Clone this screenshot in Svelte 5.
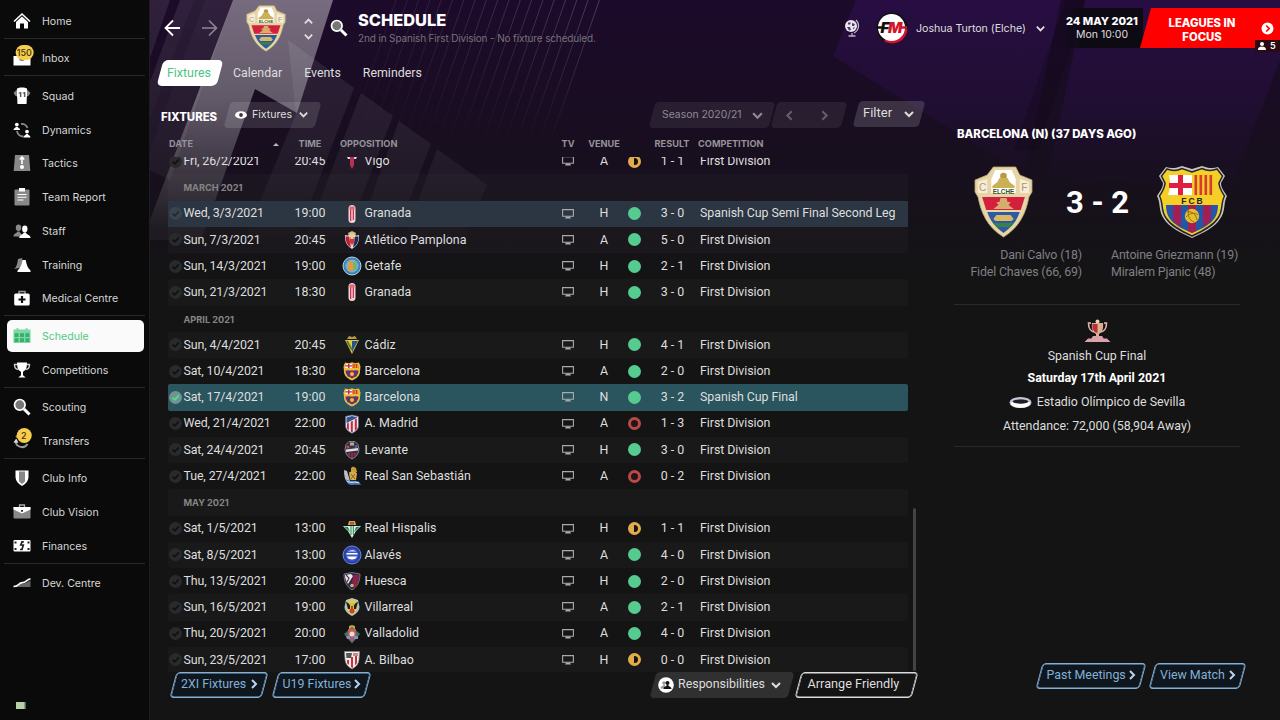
<script>
	const nav = [
		[{ label: 'Home', icon: 'home' }],
		[{ label: 'Inbox', icon: 'inbox', count: 150 }],
		[
			{ label: 'Squad', icon: 'squad' },
			{ label: 'Dynamics', icon: 'dynamics' },
			{ label: 'Tactics', icon: 'tactics' },
			{ label: 'Team Report', icon: 'report' },
			{ label: 'Staff', icon: 'staff' },
			{ label: 'Training', icon: 'training' },
			{ label: 'Medical Centre', icon: 'medical' }
		],
		[
			{ label: 'Schedule', icon: 'schedule' },
			{ label: 'Competitions', icon: 'cup' }
		],
		[
			{ label: 'Scouting', icon: 'search' },
			{ label: 'Transfers', icon: 'transfers', count: 2 }
		],
		[
			{ label: 'Club Info', icon: 'shield' },
			{ label: 'Club Vision', icon: 'briefcase' },
			{ label: 'Finances', icon: 'money' }
		],
		[{ label: 'Dev. Centre', icon: 'dev' }]
	];

	// 18x18 glyphs
	const icons = {
		home: '<path d="M1 9.5 9 2l8 7.5" fill="none" stroke="#fff" stroke-width="1.6"/><path d="M3 10 9 4.6 15 10v6.5h-4V11.5H7v5H3z" fill="#fff"/>',
		inbox: '<path d="M.5 7h17v9.500H.5z" fill="#fff"/><path d="M6 9a3 3 0 0 0 6 0V7H6z" fill="#777"/>',
		squad: '<path d="M.5 6 5 1.500 6 8l-3 1.500z" fill="#888"/><path d="M17.500 6 13 1.500 12 8l3 1.500z" fill="#888"/><path d="M4 1.500 7 .5h4l3 1v6l-.5 9.500h-9L4 7.500z" fill="#fff"/><text x="9" y="10" font-size="8" font-weight="700" font-family="Roboto" letter-spacing="-.5" text-anchor="middle" fill="#333">11</text>',
		dynamics: '<path d="M8 3a6.500 6.500 0 0 1 6.500 4M10.500 15.500A6.500 6.500 0 0 1 4 10" fill="none" stroke="#888" stroke-width="1.800"/><circle cx="3.800" cy="3.600" r="1.900" fill="#fff"/><path d="M.5 9c0-2 2-2 2.500-3h1.600c.5 1 2.500 1 2.500 3z" fill="#fff"/><circle cx="14" cy="10.600" r="1.900" fill="#fff"/><path d="M10.500 16.500c0-2 2-2 2.700-3.500h1.600c.6 1.500 2.700 1.500 2.700 3.500z" fill="#fff"/>',
		tactics: '<path d="M2 1h14l1.300 16H.7z" fill="#888"/><path d="M9 3v7M6.800 5.500 9 3l2.200 2.500" fill="none" stroke="#fff" stroke-width="1.600"/><circle cx="9" cy="13" r="2" fill="#fff"/>',
		report: '<rect x="1.500" y="1.500" width="15" height="16" rx="1" fill="#888"/><rect x="6" y="0" width="6" height="3.500" fill="#fff"/><path d="M4.500 6.500h9M4.500 9.200h9M4.500 12h6" stroke="#fff" stroke-width="1.100"/>',
		staff: '<ellipse cx="5.500" cy="5.800" rx="2.700" ry="3.300" fill="#888"/><path d="M.5 14.500c0-3.500 3-2.500 4-5h2c.7 2 3 2 3 5z" fill="#888"/><ellipse cx="11.800" cy="7" rx="2.700" ry="3.400" fill="#fff"/><path d="M6.300 16c0-3.500 3.500-2.800 4.500-5.500h2c1 2.700 4.700 2 4.700 5.500z" fill="#fff"/>',
		training: '<path d="m5 3 4-1 2 9-10 2c2-1 3.500-5 4-10z" fill="#888"/><path d="M9.500 4h3.200c1 5 2 8 4.800 10.500v1.500H4.500v-1.500C7.500 12 8.500 9 9.500 4z" fill="#fff"/>',
		medical: '<path d="M6 5V2.500h6V5" fill="none" stroke="#999" stroke-width="1.500"/><rect x="1.200" y="4.500" width="15.500" height="12" rx="1.500" fill="#fff"/><path d="M9 7v7M5.500 10.500h7" stroke="#111" stroke-width="2.200"/>',
		schedule: '<path d="M4.500 1v3M13.500 1v3" stroke="#8fdcb0" stroke-width="2"/><rect x=".5" y="2.500" width="17" height="13.500" fill="#7fd6a6"/><path d="M1.500 6.200h4v3.700h-4zM7 6.200h4v3.700H7zM12.400 6.200h4v3.700h-4zM1.500 11.200h4v3.700h-4zM7 11.200h4v3.700H7zM12.400 11.200h4v3.700h-4z" fill="#32b368"/>',
		cup: '<path d="M4.500 3.500h-3c0 4 1.500 5 4 5M13.500 3.500h3c0 4-1.500 5-4 5" fill="none" stroke="#ccc" stroke-width="1.400"/><path d="M4 1.500h10c0 6-1.500 8-4 9.200v3.500l2.700 2.300H5.300L8 14.200v-3.500C5.500 9.500 4 7.500 4 1.500z" fill="#fff"/>',
		search: '<circle cx="6.800" cy="6.800" r="5.300" fill="#777" stroke="#fff" stroke-width="1.700"/><path d="m11 11 5.500 5.500" stroke="#fff" stroke-width="3"/>',
		transfers: '<path d="M2.500 9a6.500 6.500 0 0 0 12 3M5 5.500 3 4" fill="none" stroke="#999" stroke-width="2"/><path d="m.5 10.500 2.700-4 2.300 4.200z" fill="#ddd"/>',
		shield: '<path d="M2.500 1.500h13v6c0 5-3.500 7.500-6.500 9.500-3-2-6.500-4.500-6.500-9.500z" fill="#fff"/><path d="M6 2.500h6v10L9 15l-3-2.500z" fill="#888"/>',
		briefcase: '<path d="M6.500 4V2h5v2" fill="none" stroke="#aaa" stroke-width="1.300"/><rect x=".5" y="4" width="17" height="11.500" rx="1" fill="#888"/><path d="M.5 4h17v2.500L9 10.500.5 6.500z" fill="#fff"/><path d="M8 7h2v1.800H8z" fill="#333"/>',
		money: '<rect x=".5" y="3" width="17" height="11.500" rx="1" fill="#fff"/><path d="M1.500 4.500h2v2h-2zM14.500 4.500h2v2h-2zM1.500 11h2v2h-2zM14.500 11h2v2h-2z" fill="#222"/><path d="M10.800 4.800H9L7.800 8h2.500L9 12.500H7" fill="none" stroke="#222" stroke-width="1.700"/>',
		dev: '<path d="M.5 13c7 0 5-3.500 9.500-3.500 3 0 4-2 7.500-3V13z" fill="#666"/><path d="M.5 12.500c5.500 0 4.500-3.500 9-3.800 3.500-.2 4-3 8-4" fill="none" stroke="#fff" stroke-width="1.700"/>'
	};

	// 20x20 club badges
	const crests = {
		celta: '<path d="M4 4h12l-2 4H6z" fill="#cfd6e2"/><path d="M8 6h4v8l-2 4-2-4z" fill="#b8324c"/><path d="M6 4h8v2H6z" fill="#a9c6e3"/>',
		granada: '<rect x="6.500" y="1" width="7" height="18" rx="3.500" fill="#f0d3d7"/><path d="M8 4h1.300v13H8zM10.700 3H12v13h-1.300z" fill="#cf3550"/><path d="M7.500 2.500h5v3h-5z" fill="#e0677a"/>',
		osasuna: '<path d="m6 3 2-1 2-1 2 1 2 1-1 4H7z" fill="#d7bd73"/><path d="M3 5c3 1 4 0 7 0s4 1 7 0c.5 7-2 11-7 14C5 16 2.500 12 3 5z" fill="#d9d9de"/><path d="M3.500 6.500h3.300l2.200 11C5 15 3.500 11.500 3.500 6.500z" fill="#c01a32"/><path d="M16.500 6.500h-3.300l-2.200 11c4-2.500 5.500-6 5.500-11z" fill="#1b2a5a"/><path d="M7.500 7h5v5L10 15l-2.500-3z" fill="#c93a36"/><path d="M8 3.500h4L11.500 9h-3z" fill="#e3d29a"/>',
		getafe: '<circle cx="10" cy="10" r="9" fill="#3f83b8" stroke="#b7d5e8"/><circle cx="10" cy="10" r="6.500" fill="#6eb1d8"/><path d="M5.500 8c3-5 7-4 6.500 1l-1 6H6.500z" fill="#e29a3b"/><path d="M11 6c4 0 5 3 3 8h-3z" fill="#75b66b"/>',
		cadiz: '<path d="M5 4 7 1l3 1 3-1 2 3z" fill="#b59d46"/><path d="M3 5h14l-4 8-3 6-3-6z" fill="#e8c93a"/><path d="M10 6h6l-4 7-2 5z" fill="#25509c"/><path d="m5 6 5 9" stroke="#527b50" stroke-width="2"/>',
		barca: '<path d="m3 1.500 4 .8 3-1 3 1 4-.8 1.500 4-.5 5c0 4-3 7-8 9-5-2-8-5-8-9l-.5-5z" fill="#e7c03d"/><path d="M4 3h6v4H3.200z" fill="#fff"/><path d="M6 3h1.500v4H6zM3.300 4.300H10v1.300H3.300z" fill="#d41f3e"/><path d="M10 3h6l.8 4H10z" fill="#e38b2d"/><path d="M11.500 3h1v4h-1zM14 3h1v4h-1z" fill="#c93332"/><path d="M3.500 9.500h13c0 4-2.500 6-6.500 8-4-2-6.500-4-6.500-8z" fill="#9b1e50"/><path d="M5.500 9.500h2v6h-2zM12.500 9.500h2v6h-2z" fill="#234a93"/><circle cx="10" cy="13" r="2" fill="#e7c03d"/>',
		atletico: '<path d="M3.500 2.500 10 1l6.500 1.500v9c0 4-3 6-6.500 7.800-3.500-1.800-6.500-3.800-6.500-7.800z" fill="#e9e9ef"/><path d="M4.500 3.500 10 2l5.500 1.500L4.500 9z" fill="#35518d"/><path d="M5 9.500 6.800 8.600v8L5 14.500zM8.800 7.700l2-1v11.600l-2-.6zM12.800 5.500l2-1v10.500l-2 2z" fill="#c2273b"/><path d="M3.500 2.500 10 1l6.500 1.500v9c0 4-3 6-6.500 7.800-3.500-1.800-6.500-3.800-6.500-7.800z" fill="none" stroke="#58658d" stroke-width=".8"/>',
		levante: '<path d="M4 4.500 7 1.500h6l3 3 1 5c-.5 5-3 7.500-7 9.500-4-2-6.500-4.500-7-9.500z" fill="#3b3044" stroke="#99949f" stroke-width=".8"/><path d="M4 9.500 16 8v2.500L4 12z" fill="#ddd"/><path d="M6 13h2v3H6zM9 13h2v5H9zM12 13h2v3h-2z" fill="#8e2843"/><path d="M8 2.500h4v3H8z" fill="#b3ae8c"/><circle cx="6" cy="7" r="1.500" fill="#b44d63"/><circle cx="14" cy="6.500" r="1.500" fill="#49669e"/>',
		sociedad: '<path d="m9 2 2-1.500 3 1.500 1 4-6 1z" fill="#c99a3f"/><path d="m2 4 3 1 3 10-3 1c-2-2-3-6-3-12z" fill="#b9bec9"/><path d="M7 6.500c3-2 7-1 8 1L14 14H8z" fill="#d8ad49"/><path d="M9 8l4 5M13 8l-5 6" stroke="#7f6029"/><path d="M4 13.500c5 2.500 8 0 13 2l2 3.500c-6-1-9 1-13-1z" fill="#4977bb"/><path d="M5 15.500c6 2 7-.5 12 1.500" stroke="#eef" fill="none"/>',
		betis: '<path d="M1 7h18l-5 5-4 7-4-7z" fill="#e8efe9"/><path d="m2 7.500 4 .5 2 5zM18 7.500l-4 .5-2 5zM8.500 7h1v9h-1zM10.800 7h1v9h-1z" fill="#188752"/><path d="m6 6 1-4h6l1 4z" fill="#c2ad58"/><path d="M8 3h4v2.500H8z" fill="#c44a3e"/>',
		alaves: '<circle cx="10" cy="10" r="9" fill="#2940a8" stroke="#6f86dc"/><circle cx="10" cy="10" r="6.500" fill="#3e59c0"/><path d="M4.500 8h11v1.500h-11zM5 11.500h10c-1 4-9 4-10 0z" fill="#fff"/><path d="M6 6.500c3-2 6-2 8 0z" fill="#d7ddf5"/>',
		huesca: '<path d="m2 3 8-1.500L18 3c0 7-2 12-8 16C4 15 2 10 2 3z" fill="#2c2d50" stroke="#98949f" stroke-width=".7"/><path d="m3 4 6-1 2 2-5 8C4 10 3 7 3 4z" fill="#e9e9e9"/><path d="m4 4 3 3-2 4" fill="none" stroke="#7b2a48" stroke-width="1.200"/><path d="m12 4 5-.5c0 7-2 11-5 13.500l-2-6z" fill="#8c2347"/><circle cx="10" cy="14.500" r="1.800" fill="#d5b266"/>',
		villarreal: '<path d="m4 3 3-1 3-1 3 1 3 1 1.500 7c0 4-3.500 7-7.500 9-4-2-7.500-5-7.500-9z" fill="#a9c4d4"/><path d="m5 4 5-2 5 2 1 6-3 7H7l-3-7z" fill="#dec760"/><path d="M4 5c3 0 3 4 6 4s3-4 6-4l-2 7H6z" fill="#18202a"/><path d="M8 6h1.500v8L8 13zM10.500 6H12v7l-1.500 1z" fill="#e4b133"/><circle cx="10" cy="14" r="2.500" fill="#c8432e"/>',
		valladolid: '<path d="m7 2 3-1 3 1v3H7z" fill="#c5a04e"/><path d="m10 3 8 7-8 9.500L2 10z" fill="#47715c"/><path d="M6 5h8v7c0 3-2 4-4 5.500C8 16 6 15 6 12z" fill="#9d5c8f"/><path d="M7 5h6v6H7z" fill="#c96045"/><circle cx="10" cy="10" r="2.500" fill="#eadcc5"/><path d="M4 12h4v3H5zM12 12h4v3h-4z" fill="#8a92a5"/>',
		athletic: '<path d="M2.500 1.500h15l-.5 8c-.5 5-3 7-7 9.500-4-2.500-6.500-4.500-7-9.500z" fill="#eee" stroke="#888" stroke-width=".7"/><path d="M5 10h2v5l-2-2zM9 7h2v11L9 17zM13 5h2v8l-2 2.500z" fill="#cf2f3b"/><path d="M4 3h6l-1 5H4.500z" fill="#555"/><path d="M11 3h5v3h-5z" fill="#c88"/>'
	};

	const league = 'First Division';
	const fixtures = [
		{ date: 'Fri, 26/2/2021', time: '20:45', team: 'Vigo', crest: 'celta', venue: 'A', outcome: 'draw', score: '1 - 1', comp: league },
		{ month: 'MARCH 2021' },
		{ date: 'Wed, 3/3/2021', time: '19:00', team: 'Granada', crest: 'granada', venue: 'H', outcome: 'win', score: '3 - 0', comp: 'Spanish Cup Semi Final Second Leg', cup: true },
		{ date: 'Sun, 7/3/2021', time: '20:45', team: 'Atlético Pamplona', crest: 'osasuna', venue: 'A', outcome: 'win', score: '5 - 0', comp: league },
		{ date: 'Sun, 14/3/2021', time: '19:00', team: 'Getafe', crest: 'getafe', venue: 'H', outcome: 'win', score: '2 - 1', comp: league },
		{ date: 'Sun, 21/3/2021', time: '18:30', team: 'Granada', crest: 'granada', venue: 'H', outcome: 'win', score: '3 - 0', comp: league },
		{ month: 'APRIL 2021' },
		{ date: 'Sun, 4/4/2021', time: '20:45', team: 'Cádiz', crest: 'cadiz', venue: 'H', outcome: 'win', score: '4 - 1', comp: league },
		{ date: 'Sat, 10/4/2021', time: '18:30', team: 'Barcelona', crest: 'barca', venue: 'A', outcome: 'win', score: '2 - 0', comp: league },
		{ date: 'Sat, 17/4/2021', time: '19:00', team: 'Barcelona', crest: 'barca', venue: 'N', outcome: 'win', score: '3 - 2', comp: 'Spanish Cup Final', selected: true },
		{ date: 'Wed, 21/4/2021', time: '22:00', team: 'A. Madrid', crest: 'atletico', venue: 'A', outcome: 'loss', score: '1 - 3', comp: league },
		{ date: 'Sat, 24/4/2021', time: '20:45', team: 'Levante', crest: 'levante', venue: 'H', outcome: 'win', score: '3 - 0', comp: league },
		{ date: 'Tue, 27/4/2021', time: '22:00', team: 'Real San Sebastián', crest: 'sociedad', venue: 'A', outcome: 'loss', score: '0 - 2', comp: league },
		{ month: 'MAY 2021' },
		{ date: 'Sat, 1/5/2021', time: '13:00', team: 'Real Hispalis', crest: 'betis', venue: 'H', outcome: 'draw', score: '1 - 1', comp: league },
		{ date: 'Sat, 8/5/2021', time: '13:00', team: 'Alavés', crest: 'alaves', venue: 'A', outcome: 'win', score: '4 - 0', comp: league },
		{ date: 'Thu, 13/5/2021', time: '20:00', team: 'Huesca', crest: 'huesca', venue: 'H', outcome: 'win', score: '2 - 0', comp: league },
		{ date: 'Sun, 16/5/2021', time: '19:00', team: 'Villarreal', crest: 'villarreal', venue: 'A', outcome: 'win', score: '2 - 1', comp: league },
		{ date: 'Thu, 20/5/2021', time: '20:00', team: 'Valladolid', crest: 'valladolid', venue: 'A', outcome: 'win', score: '4 - 0', comp: league },
		{ date: 'Sun, 23/5/2021', time: '17:00', team: 'A. Bilbao', crest: 'athletic', venue: 'H', outcome: 'draw', score: '0 - 0', comp: league }
	];

	const tabs = ['Fixtures', 'Calendar', 'Events', 'Reminders'];
	let activeTab = $state('Fixtures');
	let activePage = $state('Schedule');

	const rays = Array.from({ length: 19 }, (_, i) => 396 + i * 11.3);
</script>

{#snippet chevron(dir, w = 11)}
	<svg class="chev {dir}" width={w} height={w} viewBox="0 0 12 12" aria-hidden="true">
		<path d="m2 4 4 4 4-4" fill="none" stroke="currentColor" stroke-width="2" />
	</svg>
{/snippet}

{#snippet elche(w, h)}
	<svg width={w} height={h} viewBox="0 0 58 72" preserveAspectRatio="none" aria-label="Elche">
		<path d="M19 1h22l4 8 12 5v12l-3 5c-3 16-9 30-25 40C13 61 7 47 4 31l-3-5V14l12-5z" fill="#e8d5a5" stroke="#b9a77a" stroke-width=".8" />
		<path d="M21 4h16l4 9v14H17V13z" fill="#fff" />
		<path d="m4 16 9-3v14H4zM54 16l-9-3v14h9z" fill="#f5edda" />
		<circle cx="29" cy="10" r="3.300" fill="#b99a42" />
		<path d="M25 12h8l2 4 5 4v2H18v-2l5-4z" fill="#ccb054" />
		<text x="29" y="28" font-family="Liberation Sans" font-size="6.300" font-weight="700" text-anchor="middle" fill="#36551f">ELCHE</text>
		<text x="8.500" y="25.500" font-family="Liberation Sans" font-size="10" text-anchor="middle" fill="#ad9a6e">C</text>
		<text x="49.500" y="25.500" font-family="Liberation Sans" font-size="10" text-anchor="middle" fill="#ad9a6e">F</text>
		<path d="M8 31h42l-4 13H12z" fill="#d3203d" />
		<path d="M26 32h6l1 4h3l-2 3 5 4H19l5-4-2-3h3z" fill="#d6ad6c" />
		<path d="M13 46h32c-3 9-8 15-16 21-8-6-13-12-16-21z" fill="#2c5ba2" />
		<path d="M19 57h20l-3 4H22z" fill="#39804a" />
		<path d="M22 49h14l3 4-2 2H21l-2-2z" fill="#dab665" />
	</svg>
{/snippet}

<div class="app">
	<svg class="backdrop" width="1130" height="330" viewBox="150 0 1130 330" aria-hidden="true">
		<defs>
			<linearGradient id="base" x2="0" y2="1">
				<stop stop-color="#1c0a2a" />
				<stop offset=".42" stop-color="#180e20" />
				<stop offset=".85" stop-color="#141414" />
			</linearGradient>
			<linearGradient id="beam" gradientUnits="userSpaceOnUse" x1="0" y1="0" x2="0" y2="230">
				<stop stop-color="#fff" stop-opacity=".4" />
				<stop offset=".42" stop-color="#fff" stop-opacity=".32" />
				<stop offset="1" stop-color="#fff" stop-opacity=".04" />
			</linearGradient>
			<linearGradient id="faint" gradientUnits="userSpaceOnUse" x1="0" y1="0" x2="0" y2="250">
				<stop stop-color="#fff" stop-opacity=".09" />
				<stop offset=".6" stop-color="#fff" stop-opacity=".055" />
				<stop offset="1" stop-color="#fff" stop-opacity="0" />
			</linearGradient>
			<linearGradient id="ray" gradientUnits="userSpaceOnUse" x1="0" y1="0" x2="0" y2="145">
				<stop stop-color="#c8b8e0" stop-opacity=".28" />
				<stop offset="1" stop-color="#c8b8e0" stop-opacity="0" />
			</linearGradient>
			<linearGradient id="violet" gradientUnits="userSpaceOnUse" x1="0" y1="0" x2="0" y2="210">
				<stop stop-color="#3a1268" stop-opacity=".4" />
				<stop offset=".5" stop-color="#2e1050" stop-opacity=".34" />
				<stop offset="1" stop-color="#20102e" stop-opacity="0" />
			</linearGradient>
		</defs>
		<rect x="150" width="1130" height="330" fill="url(#base)" />
		<path d="M150 0h20l-20 58zM180 0h53l-63 180-20-10V82z" fill="url(#faint)" />
		<path d="m205 0-55 150v-30L194 0z" fill="#160a22" opacity=".25" />
		<path d="M233 0h100l-36 113-42-24-54 151h-51v-20z" fill="url(#beam)" />
		<path d="m288 40 66 48-62 162h-52l56-136zM361 93l32 23-52 134h-40zM399 121l32 23-41 106h-38zM437 149l50 36-29 65h-58z" fill="url(#faint)" />
		{#each rays as x, i}
			<path d="M{x} 0 {x - 52} 150" stroke="url(#ray)" stroke-width="1" opacity={0.35 + (i / 18) * 0.65} />
		{/each}
		<path d="M856 0h205l-37 175L833 56zM1085 0h195v60l-50 130-182-15z" fill="url(#violet)" />
		<path d="M1066 0h20l-48 150h-24z" fill="#100818" opacity=".3" />
	</svg>

	<nav class="sidebar">
		{#each nav as group}
			<div class="group">
				{#each group as item}
					<button class="nav-item" class:active={activePage === item.label} onclick={() => (activePage = item.label)}>
						<span class="nav-icon">
							<svg width="18" height="18" viewBox="0 0 18 18">{@html icons[item.icon]}</svg>
							{#if item.count}<b class="count">{item.count}</b>{/if}
						</span>
						<span class="nav-label">{item.label}</span>
					</button>
				{/each}
			</div>
		{/each}
		<i class="status"></i>
	</nav>

	<div class="main">
		<header>
			<svg class="arrow" width="17" height="18" viewBox="0 0 17 18"><path d="M16 9H1.500M9 1.500 1.500 9 9 16.500" fill="none" stroke="#fff" stroke-width="1.800" /></svg>
			<svg class="arrow next" width="17" height="18" viewBox="0 0 17 18"><path d="M1 9h14.500M8 1.500 15.500 9 8 16.500" fill="none" stroke="#8d8694" stroke-width="1.600" /></svg>
			<div class="club">{@render elche(40, 47)}</div>
			<div class="stepper">{@render chevron('up')}{@render chevron('down')}</div>
			<svg class="find" width="18" height="18" viewBox="0 0 18 18">{@html icons.search}</svg>
			<div class="title">
				<h1>SCHEDULE</h1>
				<p>2nd in Spanish First Division - No fixture scheduled.</p>
			</div>
			<svg class="globe" width="16" height="18" viewBox="0 0 16 18">
				<path d="M12 1a8 8 0 0 1-2 13M8 14v2.500M4.500 17h7" fill="none" stroke="#bdb6c6" stroke-width="1.300" />
				<circle cx="7" cy="7" r="6" fill="#e9e5ee" />
				<path d="M4 3.500h3l-1 2H4zM8 4l3 1-1 2H8zM3 8h3l1 3-2 .5zM9 8.500h2l-1.500 2z" fill="#4f3d60" />
			</svg>
			<svg class="fm" width="32" height="32" viewBox="0 0 32 32">
				<circle cx="16" cy="16" r="15.500" fill="#111" />
				<path d="M31.500 17A15.500 15.500 0 0 1 8 29.300L16 16z" fill="#d3122b" />
				<circle cx="15.500" cy="15.500" r="13.500" fill="#fff" />
				<path d="M1 15.500h5" stroke="#111" stroke-width="2.500" />
				<path d="M25 15.500h6" stroke="#c51a2c" stroke-width="2.500" />
				<text x="4.500" y="21" font-family="Inter" font-size="15" font-weight="900" font-style="italic" fill="#111">F</text>
				<text x="12" y="21" font-family="Inter" font-size="15" font-weight="900" font-style="italic" fill="#d3122b">M</text>
			</svg>
			<span class="manager">Joshua Turton (Elche)</span>
			{@render chevron('down')}
			<div class="clock"><b>24 MAY 2021</b><span>Mon 10:00</span></div>
			<div class="continue">
				<b>LEAGUES IN<br />FOCUS</b>
				<svg width="13" height="13" viewBox="0 0 13 13"><circle cx="6.500" cy="6.500" r="6" fill="#fff" /><path d="m5.200 3.500 3 3-3 3" fill="none" stroke="#f00" stroke-width="1.700" /></svg>
				<span class="online"><svg width="8" height="8" viewBox="0 0 8 8"><circle cx="4" cy="2" r="2" fill="#fff" /><path d="M0 8c0-3 2-3 4-3.500C6 5 8 5 8 8z" fill="#fff" /></svg>5</span>
			</div>
		</header>

		<div class="tabs">
			{#each tabs as tab}
				<button class="tab" class:on={activeTab === tab} onclick={() => (activeTab = tab)}><span>{tab}</span></button>
			{/each}
		</div>

		<div class="columns">
			<section class="fixtures">
				<div class="toolbar">
					<h2>FIXTURES</h2>
					<button class="slant view">
						<svg width="12" height="8" viewBox="0 0 12 8"><ellipse cx="6" cy="4" rx="6" ry="3.700" fill="#fff" /><circle cx="6" cy="4" r="1.900" fill="#3b3440" /></svg>
						<span>Fixtures</span>{@render chevron('down')}
					</button>
					<button class="slant season"><span>Season 2020/21</span>{@render chevron('down', 13)}</button>
					<div class="slant pager">{@render chevron('left', 13)}{@render chevron('right', 13)}</div>
					<button class="slant filter"><span>Filter</span>{@render chevron('down', 12)}</button>
				</div>

				<div class="row head">
					<span class="h-date">DATE <i></i></span>
					<span class="mid">TIME</span>
					<span class="h-team">OPPOSITION</span>
					<span class="mid">TV</span>
					<span class="mid">VENUE</span>
					<span></span>
					<span class="mid">RESULT</span>
					<span class="h-comp">COMPETITION</span>
				</div>

				<div class="scroller">
					<div class="list">
						{#each fixtures as f, i}
							{#if f.month}
								<div class="row month" class:odd={i % 2}>{f.month}</div>
							{:else}
								<div class="row" class:odd={i % 2} class:cup={f.cup} class:selected={f.selected}>
									<svg class="tick" width="13" height="13" viewBox="0 0 13 13"><circle cx="6.500" cy="6.500" r="6.500" /><path d="m3.500 6.700 2.300 2.200 4-4.500" /></svg>
									<span class="date">{f.date}</span>
									<span class="mid">{f.time}</span>
									<svg class="crest" width="20" height="20" viewBox="0 0 20 20">{@html crests[f.crest]}</svg>
									<span class="team">{f.team}</span>
									<svg class="tv" width="12" height="10" viewBox="0 0 12 10"><path d="M.6.6h10.800v6.600H.6z" fill="none" stroke="currentColor" stroke-width="1.100" /><path d="M4 7.500h4l1 2H3z" fill="currentColor" /></svg>
									<span class="mid">{f.venue}</span>
									<i class="dot {f.outcome}"></i>
									<span class="mid score">{f.score}</span>
									<span class="comp">{f.comp}</span>
								</div>
							{/if}
						{/each}
					</div>
					<div class="thumb"></div>
				</div>

				<footer>
					<button class="slant line blue two">2XI Fixtures {@render chevron('right', 12)}</button>
					<button class="slant line blue u19">U19 Fixtures {@render chevron('right', 12)}</button>
					<button class="slant resp">
						<svg width="16" height="16" viewBox="0 0 16 16"><circle cx="8" cy="8" r="7.800" fill="#fff" /><circle cx="6" cy="6" r="1.800" fill="#999" /><path d="M2.500 11.500c0-2.500 2-2 3-3.500h1.500v3.500z" fill="#999" /><circle cx="9.500" cy="6" r="2" fill="#111" /><path d="M5.500 12c0-2.500 2.500-2 3.300-4h1.400c.8 2 3.300 1.500 3.300 4z" fill="#111" /></svg>
						<span>Responsibilities</span>{@render chevron('down', 12)}
					</button>
					<button class="slant line arrange">Arrange Friendly</button>
				</footer>
			</section>

			<aside>
				<h2>BARCELONA (N) (37 DAYS AGO)</h2>
				<div class="versus">
					{@render elche(59, 72)}
					<strong>3 - 2</strong>
					<svg width="70" height="72" viewBox="0 0 70 72" aria-label="Barcelona">
						<path d="M9 1c5 2 11 1 16-1l10 3 10-3c5 2 11 3 16 1l7 9-4 7c0 5 3 8 6 13-4 7-1 15-7 23-5 8-17 14-28 19C24 67 12 61 7 53 1 45 4 37 0 30c3-5 6-8 6-13L2 10z" fill="#c9c6bd" />
						<path d="M10 3c5 2 10 2 15-.5L35 6l10-3.500C50 5 55 5 60 3l5.500 7-3.500 7c0 5 3 9 5.500 13-4 7-1 15-6.500 22-5 8-15 13-26 18C24 65 14 60 9 52 3.500 45 6.500 37 2.500 30 5 26 8 22 8 17l-3.500-7z" fill="#f5cf28" stroke="#25252b" stroke-width="1.500" />
						<path d="M12 9h23v20H11c2-5 3-10 1-20z" fill="#fff" />
						<path d="M21 9h5v20h-5zM12 17h23v5H12z" fill="#e01e42" />
						<path d="M35 9h23c-2 9-1 15 1 20H35z" fill="#f5cf28" />
						<path d="M37.500 9h2.600v20h-2.600zM42.500 9h2.600v20h-2.600zM47.500 9h2.600v20h-2.600zM52.500 9h2.600v20h-2.600z" fill="#d83a32" />
						<path d="M9 39h52c0 16-10 21-26 28C19 60 9 55 9 39z" fill="#2157a7" />
						<path d="M16 39h8v22l-8-6zM31 39h8v26l-4 2-4-2zM46 39h8v16l-8 6z" fill="#a31e55" />
						<circle cx="35" cy="50" r="7.200" fill="#e7bd2e" />
						<path d="M30 46c5-1 9 2 10 8M32 44c-2 5 0 10 5 12M29 51c4-4 9-5 12-2" fill="none" stroke="#8c6c16" stroke-width=".9" />
						<text x="36" y="37.500" font-family="Liberation Sans" font-size="8.500" font-weight="700" letter-spacing="2" text-anchor="middle" fill="#222">FCB</text>
					</svg>
				</div>
				<div class="scorers">
					<p>Dani Calvo (18)<br />Fidel Chaves (66, 69)</p>
					<p>Antoine Griezmann (19)<br />Miralem Pjanic (48)</p>
				</div>
				<div class="details">
					<svg width="27" height="24" viewBox="0 0 27 24">
						<path d="M7 4H4.500c0 6 2 8 6 9M20 4h2.500c0 6-2 8-6 9" fill="none" stroke="#e2b6ae" stroke-width="1.600" />
						<path d="M8 4h11c1 7-2 10-4 11v3h-3v-3C10 14 7 11 8 4z" fill="#dfae8d" />
						<path d="M8.500 5h5v9c-4-1-5.500-4-5-9z" fill="#b92c3c" />
						<circle cx="13.500" cy="2.500" r="2" fill="#e6d3b1" />
						<path d="M9 17h9l2 3H7zM4 19.500h19l3.500 3.500H.5z" fill="#d9a3a9" />
					</svg>
					<p class="final">Spanish Cup Final</p>
					<p class="day">Saturday 17th April 2021</p>
					<p class="ground">
						<svg width="23" height="13" viewBox="0 0 23 13"><ellipse cx="11.500" cy="6.500" rx="11" ry="5.500" fill="#c9c4d8" /><ellipse cx="11.500" cy="7.500" rx="9.500" ry="4.300" fill="#fff" /><ellipse cx="11.500" cy="5.500" rx="8" ry="2.200" fill="#201c28" /></svg>
						Estadio Olímpico de Sevilla
					</p>
					<p class="crowd">Attendance: 72,000 (58,904 Away)</p>
				</div>
				<div class="actions">
					<button class="slant line blue past">Past Meetings {@render chevron('right', 12)}</button>
					<button class="slant line blue match">View Match {@render chevron('right', 12)}</button>
				</div>
			</aside>
		</div>
	</div>
</div>

<style>
	:global(body) { margin: 0; background: #141414; }

	.app {
		position: relative;
		display: flex;
		width: 1280px;
		height: 720px;
		overflow: hidden;
		background: #141414;
		color: #dedede;
		font: 12.4px/16px Roboto, "Liberation Sans", sans-serif;
	}

	h1, h2, p { margin: 0; }
	svg { display: block; flex: none; }
	button { border: 0; padding: 0; background: none; color: inherit; font: inherit; text-align: left; white-space: nowrap; }
	.backdrop { position: absolute; top: 0; left: 150px; }

	.sidebar {
		position: relative;
		box-sizing: border-box;
		flex: none;
		width: 150px;
		padding: 4px 4px 0;
		background: #0a0a0a;
		border-right: 1px solid #1e1b22;
		display: flex;
		flex-direction: column;
		font-family: Inter, sans-serif;
		font-size: 10.600px;
	}
	.group + .group { border-top: 1px solid #292929; padding-top: 2.75px; }
	.nav-item {
		display: flex;
		align-items: center;
		gap: 11.500px;
		box-sizing: border-box;
		width: 137px;
		height: 33.75px;
		margin-left: 3px;
		padding-left: 5.500px;
		border-radius: 5px;
		color: #d6d6d6;
	}
	.nav-item.active { background: #fafafa; color: #52c986; height: 32px; margin: 0.75px 0 1px 3px; }
	.nav-icon { position: relative; width: 18px; }
	.nav-label { padding-top: 2px; }
	.count {
		position: absolute;
		left: 50%;
		bottom: 7px;
		min-width: 15px;
		height: 15px;
		padding: 0 1.500px;
		box-sizing: border-box;
		transform: translateX(-35%);
		border-radius: 8px;
		background: #f7cd4b;
		color: #3b300c;
		font: 500 9px/15px Inter, sans-serif;
		text-align: center;
	}
	.status { width: 10px; height: 7px; margin: auto 0 11px 12px; background: linear-gradient(90deg, #b9cfa8 75%, #3c4a3a); }

	.main { position: relative; flex: 1; min-width: 0; display: flex; flex-direction: column; }

	header { display: flex; align-items: center; height: 56px; padding-left: 14px; }
	.next { margin-left: 20px; }
	.club { margin-left: 28px; }
	.stepper { display: flex; flex-direction: column; gap: 4px; margin: 2px 0 0 17px; }
	.find { margin-left: 16px; }
	.title { width: 486px; padding-left: 10px; box-sizing: border-box; flex: none; }
	h1 { font: 800 16.400px/19px Inter, sans-serif; color: #fff; padding-top: 1px; }
	.title p { font: 10px/16px Inter, sans-serif; letter-spacing: -0.14px; color: #77717d; }
	.globe { margin-left: 10px; }
	.fm { margin-left: 16px; }
	.manager { width: 119px; margin-left: 8px; padding-top: 2px; font: 10.700px/16px Inter, sans-serif; white-space: nowrap; letter-spacing: -0.05px; }
	.clock { flex: none; display: flex; flex-direction: column; align-items: center; justify-content: center; width: 82px; height: 40px; margin-left: 15px; background: linear-gradient(90deg, transparent, #0e0a14 25%); font: 10.500px/14px Inter, sans-serif; }
	.clock b { font-size: 11px; color: #fff; font-weight: 800; }
	.continue {
		position: relative;
		flex: 1;
		display: flex;
		align-items: center;
		justify-content: flex-end;
		height: 40px;
		margin-left: -3px;
		color: #fff;
	}
	.continue::before { content: ""; position: absolute; inset: 0; background: #f00; clip-path: polygon(11px 0, 100% 0, 100% 100%, 0 100%); }
	.continue b { position: relative; width: 100px; text-align: center; font: 800 11.300px/14px Inter, sans-serif; padding-top: 3px; margin-right: 9px; }
	.continue > svg { position: relative; margin-right: 6px; }
	.online { position: absolute; right: 0; top: 32px; display: flex; align-items: center; gap: 4px; height: 12px; width: 22px; padding-left: 3px; background: #2b0a12; font: 600 9px/12px Inter, sans-serif; }

	.tabs { display: flex; height: 26px; margin: 4px 0 0 6px; }
	.tab { position: relative; padding: 0 11px; height: 26px; font-size: 12.4px; line-height: 24px; }
	.tab span { position: relative; }
	.tab.on { color: #4bc681; }
	.tab.on::before { content: ""; position: absolute; inset: 0 2px 0 4px; transform: skewX(-15deg); border-radius: 5px; background: #fff; }

	.columns { display: flex; flex: 1; }
	.fixtures { flex: none; width: 792px; display: flex; flex-direction: column; }

	.toolbar { display: flex; align-items: center; height: 28px; margin: 15px 0 0 11px; }
	h2 { font: 800 11.400px/14px Inter, sans-serif; color: #fff; }
	.toolbar h2 { width: 68px; padding-top: 4px; }

	.slant { position: relative; z-index: 0; display: flex; align-items: center; box-sizing: border-box; flex: none; height: 26px; }
	.slant::before { content: ""; position: absolute; z-index: -1; inset: 0 3px; transform: skewX(-15deg); border-radius: 4px; background: rgba(255, 255, 255, 0.12); }
	.slant.line::before { box-sizing: border-box; border: 1px solid #dcdcdc; background: none; box-shadow: inset 0 0 0 0.6px #dcdcdc; }
	.slant.line.blue::before { border-color: #82b0d6; background: #10161d; box-shadow: inset 0 0 0 0.6px #82b0d6; }
	.slant.blue { color: #82b0d6; }

	.chev.up { transform: rotate(180deg); }
	.chev.left { transform: rotate(90deg); }
	.chev.right { transform: rotate(-90deg); }

	.view { width: 97px; margin-left: -5px; padding: 0 0 1px 11px; gap: 5px; font: 10.600px/16px Inter, sans-serif; }
	.view .chev, .view span { margin-right: 1px; }
	.season { width: 126px; margin-left: 328px; padding-left: 13px; gap: 9px; color: #8f8a93; font: 10.400px/16px Inter, sans-serif; }
	.season::before, .pager::before { background: rgba(255, 255, 255, 0.07); }
	.pager { width: 76px; margin-left: -4px; padding: 0 16px 0 12px; justify-content: space-between; color: #625d66; }
	.filter { width: 72px; margin: -2px 0 0 6px; padding: 0 10px; justify-content: space-between; font-size: 13px; }
	.filter span { margin-top: -2px; }
	.filter::before { background: rgba(255, 255, 255, 0.15); }

	.row {
		display: grid;
		grid-template-columns: 15.500px 96.500px 60px 23px 187px 36px 36px 24px 53px 1fr;
		align-items: center;
		width: 740px;
		height: 26.25px;
		border-radius: 3px;
	}
	.row.odd { background: rgba(255, 255, 255, 0.022); }
	.row.cup { background: #2c3642; border-radius: 0; }
	.row.selected { background: #2a545e; border-radius: 2px; }
	.mid { text-align: center; }
	.head {
		grid-template-columns: 112px 60px 210px 36px 36px 24px 52px 1fr;
		height: 18px;
		margin: 6px 0 0 18px;
		color: #969299;
		font: 700 9.200px/14px Inter, sans-serif;
	}
	.h-date { display: flex; justify-content: space-between; align-items: center; padding: 0 1px; }
	.h-date i { border: 3px solid transparent; border-top: 0; border-bottom-color: #bbb; }

	.month { display: block; box-sizing: border-box; padding-left: 15.500px; color: #858585; font: 700 9.2px/28px Inter, sans-serif; }
	.scroller { display: flex; height: 515px; margin: 4px 0 0 18px; overflow: hidden; }
	.list { margin-top: -9px; width: 740px; }
	.thumb { width: 3px; height: 163px; margin: 351px 0 0 5px; background: #434343; border-radius: 2px; }
	.date, .team, .comp { white-space: nowrap; }
	.list .row span { margin-top: -0.5px; }
	.date { letter-spacing: -0.12px; }
	.team, .comp { padding-left: 1.500px; }
	.team { letter-spacing: 0.04px; }
	.comp { padding-left: 1px; letter-spacing: -0.05px; }
	.crest { justify-self: center; }
	.tv { justify-self: center; color: #aaa; }
	.tick { margin-left: 1px; }
	.tick circle { fill: #2a2a2c; }
	.tick path { fill: none; stroke: #111; stroke-width: 1.700px; }
	.cup .tick circle { fill: #3a444f; }
	.cup .tick path { stroke: #202932; }
	.selected .tick circle { fill: #71948f; }
	.selected .tick path { stroke: #4ee08f; }
	.dot { justify-self: center; width: 13px; height: 13px; border-radius: 50%; box-sizing: border-box; background: #55cb90; }
	.dot.draw { border: 3px solid #e2ac4d; background: linear-gradient(90deg, #e2ac4d 45%, #171410 45%); }
	.dot.loss { border: 3px solid #b84a4a; background: #241517; }

	footer { display: flex; margin-left: 20px; }
	footer .slant, .actions .slant { padding-left: 11px; padding-bottom: 2px; }
	.two { width: 98px; justify-content: space-between; }
	.u19 { width: 99px; margin-left: 3.5px; justify-content: space-between; }
	footer .two, footer .u19, .actions .slant { padding-right: 8px; color: #82b0d6; }
	.line .chev { color: #b9d4ec; }
	footer .resp { width: 144px; margin-left: 279px; padding: 0 12px 0 8px; gap: 4px; justify-content: space-between; }
	.resp span { margin-top: -2px; }
	footer .arrange { width: 123px; margin-left: 1px; padding-left: 13px; font-size: 12.7px; }

	aside { flex: 1; min-width: 0; display: flex; flex-direction: column; padding: 41px 40px 0 12px; }
	aside h2 { padding-left: 3px; }
	.versus { display: flex; align-items: center; justify-content: space-between; margin: 25px 13px 0 20px; }
	.versus strong { font: 700 31px/36px Roboto, sans-serif; color: #fff; padding: 2px 0 0 5px; }
	.scorers { display: flex; gap: 29px; margin-top: 8px; color: #807f83; line-height: 17px; letter-spacing: -0.16px; }
	.scorers p:first-child { width: 128px; text-align: right; }
	.scorers p { white-space: nowrap; }
	.details { display: flex; flex-direction: column; align-items: center; height: 141px; margin-top: 24px; border: solid #292929; border-width: 1px 0; }
	.details > svg { margin-top: 14px; }
	.final { margin-top: 5px; }
	.day { margin-top: 6px; font-weight: 700; color: #fff; }
	.ground { display: flex; align-items: center; gap: 5px; margin-top: 8px; }
	.crowd { margin-top: 8px; }
	.actions { display: flex; justify-content: flex-end; gap: 3.5px; margin: auto -6px 31px 0; }
	.past { width: 110px; justify-content: space-between; }
	.match { width: 97px; justify-content: space-between; }
</style>
